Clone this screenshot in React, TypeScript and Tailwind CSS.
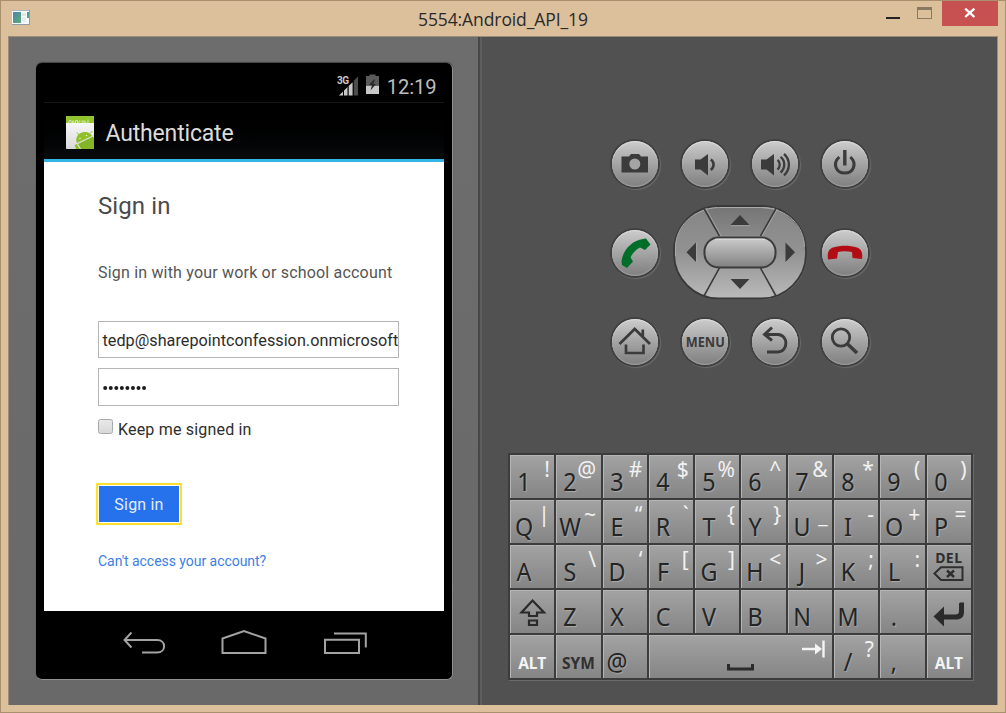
import React from "react";

const DARK = "#3b3b3b";

function WindowIcon() {
  return (
    <svg width="20" height="17" viewBox="0 0 20 17">
      <defs>
        <linearGradient id="app" x1="0" y1="0" x2="1" y2="1">
          <stop offset="0" stopColor="#4a86a8" />
          <stop offset="1" stopColor="#5cab7c" />
        </linearGradient>
      </defs>
      <rect x="1" y="1" width="18" height="15" fill="#929ba6" />
      <rect x="1" y="1" width="17" height="14" fill="#f8f9fa" />
      <rect x="1" y="1" width="17" height="1" fill="#a9b4c4" />
      <rect x="2" y="3" width="8" height="11" fill="url(#app)" />
      <rect x="11" y="4" width="4" height="3" fill="#e4e6e8" />
      <rect x="11" y="8" width="4" height="5" fill="#e9ebec" />
      <rect x="16" y="3" width="2" height="6" fill="url(#app)" />
    </svg>
  );
}

function TitleBar() {
  return (
    <div className="flex h-[35px] w-full shrink-0">
      <div className="w-[160px] pt-[8px] pl-[10px]">
        <WindowIcon />
      </div>
      <div className="flex-1 pt-[5px] pl-[257px] font-['Open_Sans',sans-serif] text-[17.5px] leading-[26px] tracking-[-0.1px] whitespace-nowrap text-[#2a2a2a]">
        5554:Android_API_19
      </div>
      <div className="flex w-[124px] items-start">
        <svg width="61" height="25" viewBox="0 0 61 25" shapeRendering="crispEdges">
          <rect x="5" y="16" width="14" height="2" fill="#222" />
          <rect x="36.5" y="6.5" width="14" height="11" fill="none" stroke="#8a7960" />
          <rect x="36" y="6" width="15" height="3" fill="#8a7960" />
        </svg>
        <div className="flex h-[25px] w-[56px] items-center justify-center bg-[#c75050]">
          <svg className="-mt-px" width="12" height="10" viewBox="0 0 12 10">
            <path d="M1.2 0.6 L10.4 9 M10.4 0.6 L1.2 9" stroke="#fff" strokeWidth="2.3" />
          </svg>
        </div>
      </div>
    </div>
  );
}

function StatusBar() {
  return (
    <div className="flex h-[39px] justify-end pr-[7px]">
      <svg className="mt-[12px] mr-[6px]" width="22" height="21" viewBox="0 0 22 21">
        <text x="0" y="9" fontSize="10" fontWeight="700" fill="#c8c8c8" fontFamily="Roboto, sans-serif" textLength="12">3G</text>
        <path d="M2 20.5 L6 16.5 V20.5 Z M7 15.5 L10.5 12 V20.5 H7 Z M11.7 11 L15.6 7.2 V20.5 H11.7 Z" fill="#c8c8c8" />
        <path d="M16.8 5.8 L21 1.5 V20.5 H16.8 Z" fill="#4c4c4c" />
      </svg>
      <svg className="mt-[11px] mr-[7px]" width="15" height="21" viewBox="0 0 15 21">
        <path d="M4.5 0.5 H10.5 V2 H14 V11 H1 V2 H4.5 Z" fill="#5a5a5a" />
        <path d="M1 11.5 H14 V20 H1 Z" fill="#c8c8c8" />
        <path d="M9 5.5 L4 11 H7 L5.500 16.500 L11 10 H8.3 L10 5.5 Z" fill="#2a2a2a" />
      </svg>
      <span className="pt-[11px] font-['Roboto',sans-serif] text-[20.2px] leading-[26px] tracking-[-0.1px] text-[#bdbdbd]">12:19</span>
    </div>
  );
}

function AppIcon() {
  return (
    <svg className="mt-[2px]" width="28" height="33" viewBox="0 0 28 33">
      <defs>
        <linearGradient id="paper" x1="0" y1="0" x2="0" y2="1">
          <stop offset="0" stopColor="#fff" />
          <stop offset="1" stopColor="#d9d9d9" />
        </linearGradient>
        <clipPath id="sheet"><rect width="28" height="33" rx="0.8" /></clipPath>
      </defs>
      <g clipPath="url(#sheet)">
        <rect width="28" height="33" fill="url(#paper)" />
        <rect width="28" height="7" fill="#92c42e" />
        <path d="M2.5 7 L3.5 4.500 H5 V7 M6.5 7 V5 H8 V7 M9.5 7 V4.500 H11.5 V7 M13 7 V5 H14.5 M16 7 V5 H18 V7 M19 4.500 V7 M22 3.500 V7 H20.5" stroke="#d8edaa" strokeWidth="0.9" fill="none" />
        <path d="M11 27 C8 21 14 15 20 16 C23 16.5 25 18 26 20 Z" fill="#8fc02a" />
        <path d="M13 19 L11 16.5 M24 17.5 L26.5 15" stroke="#8fc02a" strokeWidth="1" />
        <path d="M12 28 L27 20.5 L28 22 V33 H15 Z" fill="#84b528" />
        <path d="M8.5 29 L11 28 L14 33 H10 Z" fill="#8fc02a" />
        <path d="M11 27.8 L28 19.5" stroke="#cfe39c" strokeWidth="0.7" />
        <path d="M11.500 28.500 L14.500 33" stroke="#e6efcf" strokeWidth="0.8" />
        <circle cx="14" cy="22.5" r="0.7" fill="#eef7d5" />
        <circle cx="20.5" cy="19.5" r="0.7" fill="#eef7d5" />
      </g>
    </svg>
  );
}

function SignInForm() {
  return (
    <div className="flex h-[449px] flex-col items-start bg-white pt-[29px] pl-[54px] font-['Roboto',sans-serif]">
      <h1 className="text-[24px] leading-[30px] tracking-[0.1px] text-[#4a4a4a]">Sign in</h1>
      <p className="mt-[42px] text-[16px] leading-[20px] tracking-[0.19px] whitespace-nowrap text-[#555]">Sign in with your work or school account</p>
      <div className="mt-[38px] flex h-[37px] w-[301px] items-center overflow-hidden border border-[#b5b5b5] pt-[3px] pl-[3.500px] text-[16.2px] tracking-[0.03px] whitespace-nowrap text-[#2c2c2c]">
        tedp@sharepointconfession.onmicrosoft
      </div>
      <div className="mt-[10px] flex h-[38px] w-[301px] items-center border border-[#b5b5b5] pl-[4px]">
        <svg className="mt-px" width="46" height="6" viewBox="0 0 46 6">
          {[0, 1, 2, 3, 4, 5, 6, 7].map((i) => (
            <circle key={i} cx={2.2 + i * 5.55} cy="3" r="2" fill="#1c1c1c" />
          ))}
        </svg>
      </div>
      <div className="mt-[12px] flex h-[22px] items-start">
        <div className="mt-px h-[15px] w-[15px] rounded-[2.5px] border border-[#a9a9a9] bg-linear-to-b from-[#e8e8e8] to-[#d8d8d8]" />
        <span className="mt-[2px] ml-[5px] text-[16px] leading-[20px] tracking-[0.19px] whitespace-nowrap text-[#2e2e2e]">Keep me signed in</span>
      </div>
      <div className="mt-[43px] -ml-[2px] flex h-[42px] w-[86px] items-center justify-center border-2 border-[#ffe02e] bg-white p-px">
        <div className="flex h-full w-full items-center justify-center bg-[#2672ec] pt-[2px] text-[16px] tracking-[0.2px] text-[#e4edfc]">Sign in</div>
      </div>
      <a className="mt-[26px] text-[14px] leading-[20px] tracking-[-0.04px] whitespace-nowrap text-[#3b7fe4]">Can't access your account?</a>
    </div>
  );
}

function NavBar() {
  return (
    <svg width="400" height="68" viewBox="0 0 400 68" fill="none" stroke="#a3a3a3" strokeWidth="2">
      <path d="M87.5 21.5 L80.500 29 L87.5 36.5 M80.500 29 H113 C122.500 29 122.500 41.500 113 41.500 H98" />
      <path d="M178.500 42 V27.500 L200 20 L221.500 27.500 V42 Z" />
      <path d="M281 28.700 H315 V42 H281 Z M290 22.500 H321.800 V36.500" />
    </svg>
  );
}

function Phone() {
  return (
    <div className="flex h-[617px] w-[416.500px] flex-col rounded-[6px] border-r border-b border-[#929292] bg-black px-[8px] shadow-[0_-1px_1px_#444]">
      <StatusBar />
      <div className="flex h-[60px] items-center border-t border-b-[3px] border-t-[#151515] border-b-[#33b5e5] bg-linear-to-b from-black to-[#080b0d] pl-[22px]">
        <AppIcon />
        <span className="mt-[5px] ml-[11.500px] font-['Roboto',sans-serif] text-[23px] leading-[30px] tracking-[-0.17px] text-[#dcdcdc]">Authenticate</span>
      </div>
      <SignInForm />
      <NavBar />
    </div>
  );
}

function RoundButton({ children }: { children: React.ReactNode }) {
  return (
    <div className="flex h-[50px] w-[50px] items-center justify-center rounded-full bg-[#404040] shadow-[1px_1px_1px_#6c6c6c]">
      <div className="h-[46px] w-[46px] rounded-full bg-linear-to-b from-[#cccccc] to-[#7f7f7f] shadow-[inset_0_1px_1px_#dedede,inset_0_-1px_1px_#a0a0a0]">
        <svg width="46" height="46" viewBox="0 0 46 46" fill="none">
          {children}
        </svg>
      </div>
    </div>
  );
}

function DPad() {
  return (
    <svg className="-mt-[2px]" width="134" height="96" viewBox="0 0 134 96">
      <defs>
        <linearGradient id="pad" x1="0" y1="0" x2="0" y2="1">
          <stop offset="0" stopColor="#858585" />
          <stop offset="0.5" stopColor="#929292" />
          <stop offset="1" stopColor="#bababa" />
        </linearGradient>
        <linearGradient id="padTop" x1="0" y1="0" x2="0" y2="1">
          <stop offset="0" stopColor="#767676" />
          <stop offset="1" stopColor="#888" />
        </linearGradient>
        <linearGradient id="ok" x1="0" y1="0" x2="0" y2="1">
          <stop offset="0" stopColor="#cdcdcd" />
          <stop offset="1" stopColor="#808080" />
        </linearGradient>
      </defs>
      <rect x="2" y="3" width="132" height="92.500" rx="45" fill="#707070" />
      <rect x="1" y="2" width="132" height="92.500" rx="45" fill="url(#pad)" stroke="#393939" strokeWidth="1.800" />
      <path d="M32 4 H102 L88 31 H46 Z" fill="url(#padTop)" />
      <path d="M46 3.500 H88 L101 4.500 M2.500 52 V43 C3 22 20 5 45 3.500 M131.500 43 C131 22 115 5 90 3.500" stroke="#a9a9a9" fill="none" />
      <path d="M31 4.500 L46.500 32 M103 4.500 L87.500 32 M46.500 64 L31 92 M87.500 64 L103 92" stroke="#3b3b3b" strokeWidth="1.600" />
      <path d="M33 4.500 L48 32 M104.500 5 L89 32 M48 64 L33 91 M89 64 L104.500 91" stroke="#aaa" strokeWidth="0.800" />
      <rect x="31.500" y="33.500" width="71" height="30" rx="14" fill="url(#ok)" stroke="#3b3b3b" strokeWidth="2" />
      <path d="M42 35.200 H92" stroke="#dedede" />
      <path d="M57.500 21 H76.500 L67 11 Z M57.500 75 H76.500 L67 85 Z M23 38.500 V58 L13.500 48.300 Z M112.500 38.500 V58 L122 48.300 Z" fill="#3b3b3b" />
      <path d="M58 21.700 H77 M23.700 38.500 V58" stroke="#aaa" strokeWidth="0.800" />
    </svg>
  );
}

function Controls() {
  return (
    <div className="grid h-[267px] w-[280px] grid-cols-4 grid-rows-3 place-items-center">
      <RoundButton>
        <path d="M9.500 15.500 H17 L19 13 H27 L29 15.500 H36 V31.500 H9.500 Z" fill={DARK} />
        <circle cx="22.800" cy="23" r="5.500" fill="#a4a4a4" />
      </RoundButton>
      <RoundButton>
        <path d="M13 18.500 H18.500 L26 13 V34.500 L18.500 28.500 H13 Z" fill={DARK} />
        <path d="M28.800 18.500 C32.500 21 32.500 26 28.800 29" stroke={DARK} strokeWidth="2.600" />
      </RoundButton>
      <RoundButton>
        <path d="M9 18.500 H14.500 L22 13 V34.500 L14.500 28.500 H9 Z" fill={DARK} />
        <path d="M25.500 19 C28.500 21 28.500 26 25.500 28.500 M28.500 15.800 C33.500 19.500 33.500 27.500 28.500 31.500 M32 13 C38.500 18.500 38.500 28.500 32 34.500" stroke={DARK} strokeWidth="2.300" />
      </RoundButton>
      <RoundButton>
        <path d="M17.300 16 C10 22.500 14 32 22.800 32 C31.500 32 35.500 22.500 28.300 16" stroke={DARK} strokeWidth="3" />
        <path d="M22.800 9 V24.500" stroke={DARK} strokeWidth="3.400" />
      </RoundButton>
      <RoundButton>
        <path d="M9.500 31 C11 20 20 10.500 31 9 L34 8.500 L38.500 14.500 L33 20 L28 17.500 C23 20 20 24 18.500 27.500 L21 31.500 L15 38 L10 35 Z" fill="#006d28" />
      </RoundButton>
      <div className="col-span-2">
        <DPad />
      </div>
      <RoundButton>
        <path d="M6 29.500 C5 22 7 19 11 17.500 C19 15 27 15 35 17.500 C39 19 41 22 40 29 L30.500 28 L30 22 C25 21 20 21 16 22 L15 28.500 Z" fill="#b20d14" />
      </RoundButton>
      <RoundButton>
        <path d="M7.500 25 L22.700 10 L38 25 M14 25.500 V34 H31.500 V25.500 M30.800 10.500 V17" stroke={DARK} strokeWidth="2.700" />
      </RoundButton>
      <RoundButton>
        <text x="23.300" y="28.200" textAnchor="middle" fontFamily="Noto Sans, sans-serif" fontWeight="700" fontSize="13.5" textLength="39" lengthAdjust="spacingAndGlyphs" fill={DARK}>MENU</text>
      </RoundButton>
      <RoundButton>
        <path d="M20 8.500 L12.500 15.500 L20 21.500 M13 15.500 H26 C36.500 16 36.500 32.500 26 33 H15" stroke={DARK} strokeWidth="2.900" />
      </RoundButton>
      <RoundButton>
        <circle cx="19" cy="18.500" r="8.700" stroke={DARK} strokeWidth="2.800" />
        <path d="M25.500 25 L35 34" stroke={DARK} strokeWidth="3.600" />
      </RoundButton>
    </div>
  );
}

const LETTER_ROWS: string[][][] = [
  [["1", "!"], ["2", "@"], ["3", "#"], ["4", "$"], ["5", "%"], ["6", "^"], ["7", "&"], ["8", "*"], ["9", "("], ["0", ")"]],
  [["Q", "|"], ["W", "~"], ["E", "“"], ["R", "`"], ["T", "{"], ["Y", "}"], ["U", "_"], ["I", "-"], ["O", "+"], ["P", "="]],
  [["A", ""], ["S", "\\"], ["D", "‘"], ["F", "["], ["G", "]"], ["H", "<"], ["J", ">"], ["K", ";"], ["L", ":"]],
];

const KEY_FACE =
  "relative h-full bg-linear-to-b from-[#a3a3a3] to-[#858585] shadow-[inset_1px_1px_0_#b5b5b5] font-['Noto_Sans',sans-serif]";

function Key({ main, alt = "" }: { main: string; alt?: string }) {
  return (
    <div className={KEY_FACE}>
      <span className="absolute top-[7.500px] left-[-6px] w-[40px] scale-x-[0.94] text-center text-[24.800px] leading-[36px] text-[#242424] [text-shadow:1px_1px_1px_#aaa]">
        {main}
      </span>
      {alt && (
        <span className={`absolute right-[4.500px] text-[21px] leading-[28px] text-[#f2f2f2] ${alt === "_" ? "top-[1px]" : "top-[0px]"}`}>
          {alt}
        </span>
      )}
    </div>
  );
}

function WordKey({ label, light = false }: { label: string; light?: boolean }) {
  return (
    <div className={KEY_FACE}>
      <div className={`pt-[17.500px] text-center text-[15.500px] leading-[21px] font-bold ${light ? "text-[#f4f4f4]" : "text-[#303030]"}`}>
        {label}
      </div>
    </div>
  );
}

function Keyboard() {
  return (
    <div className="grid h-[227px] w-[465px] grid-cols-10 grid-rows-5 gap-[2px] border-2 border-[#3c3c3c] bg-[#3c3c3c] shadow-[1px_1px_0_#6a6a6a]">
      {LETTER_ROWS.flat().map(([main, alt]) => (
        <Key key={main} main={main} alt={alt} />
      ))}
      <div className={KEY_FACE}>
        <div className="pt-[5px] text-center text-[14px] leading-[16px] font-bold tracking-[0.500px] text-[#2f2f2f]">DEL</div>
        <svg className="ml-[6px]" width="32" height="18" viewBox="0 0 32 18" fill="none" stroke="#2f2f2f">
          <path d="M1.500 7.500 L8 1.200 H29.500 V14 H8 Z" strokeWidth="2" />
          <path d="M14 4.500 L21 11 M21 4.500 L14 11" strokeWidth="2.400" />
        </svg>
      </div>
      <div className={KEY_FACE}>
        <svg width="44" height="42" viewBox="0 0 44 42" fill="none" stroke="#2a2a2a" strokeWidth="2.200">
          <path d="M22.500 10.500 L34 22.500 H27 V26 H19 V22.500 H11.500 Z M19 30.500 H27 V35 H19 Z" />
        </svg>
      </div>
      {["Z", "X", "C", "V", "B", "N", "M", "."].map((k) => (
        <Key key={k} main={k} />
      ))}
      <div className={KEY_FACE}>
        <svg width="44" height="42" viewBox="0 0 44 42">
          <path d="M6.500 26.500 L17 16.500 V24.500 H28 C31 24.500 32 23.500 32 20.500 V14.500 C32 12.500 33 12.500 34 12.500 H37 V21.500 C37 27.500 34 29.500 29 29.500 H17 V36.500 Z" fill="#2b2b2b" />
        </svg>
      </div>
      <WordKey label="ALT" light />
      <WordKey label="SYM" />
      <Key main="@" />
      <div className={`${KEY_FACE} col-span-4`}>
        <svg width="183" height="42" viewBox="0 0 183 42" fill="none">
          <path d="M79.500 29 V34 H103.500 V29" stroke="#2b2b2b" strokeWidth="3" />
          <path d="M153 14 H168 M174.500 5.500 V22.500" stroke="#f4f4f4" strokeWidth="2.400" />
          <path d="M166 8.500 L173 14 L166 19.500 Z" fill="#f4f4f4" />
        </svg>
      </div>
      <Key main="/" alt="?" />
      <Key main="," />
      <WordKey label="ALT" light />
    </div>
  );
}

export default function App() {
  return (
    <div className="flex h-[713px] w-[1006px] flex-col overflow-hidden border border-[#a8906f] bg-[#dcbf9b] antialiased">
      <TitleBar />
      <div className="ml-[7px] flex h-[669px] w-[990px] border border-b-0 border-[#9a8c78]">
        <div className="w-[469px] shrink-0 bg-linear-to-b from-[#6d6d6d] to-[#696969] pt-[26px] pl-[27px]">
          <Phone />
        </div>
        <div className="flex flex-1 flex-col border-l-2 border-[#474747] bg-[#515151] shadow-[inset_2px_0_0_#5e5e5e]">
          <div className="pt-[82.500px] pl-[120px]">
            <Controls />
          </div>
          <div className="pt-[66.500px] pl-[28px]">
            <Keyboard />
          </div>
        </div>
      </div>
    </div>
  );
}
